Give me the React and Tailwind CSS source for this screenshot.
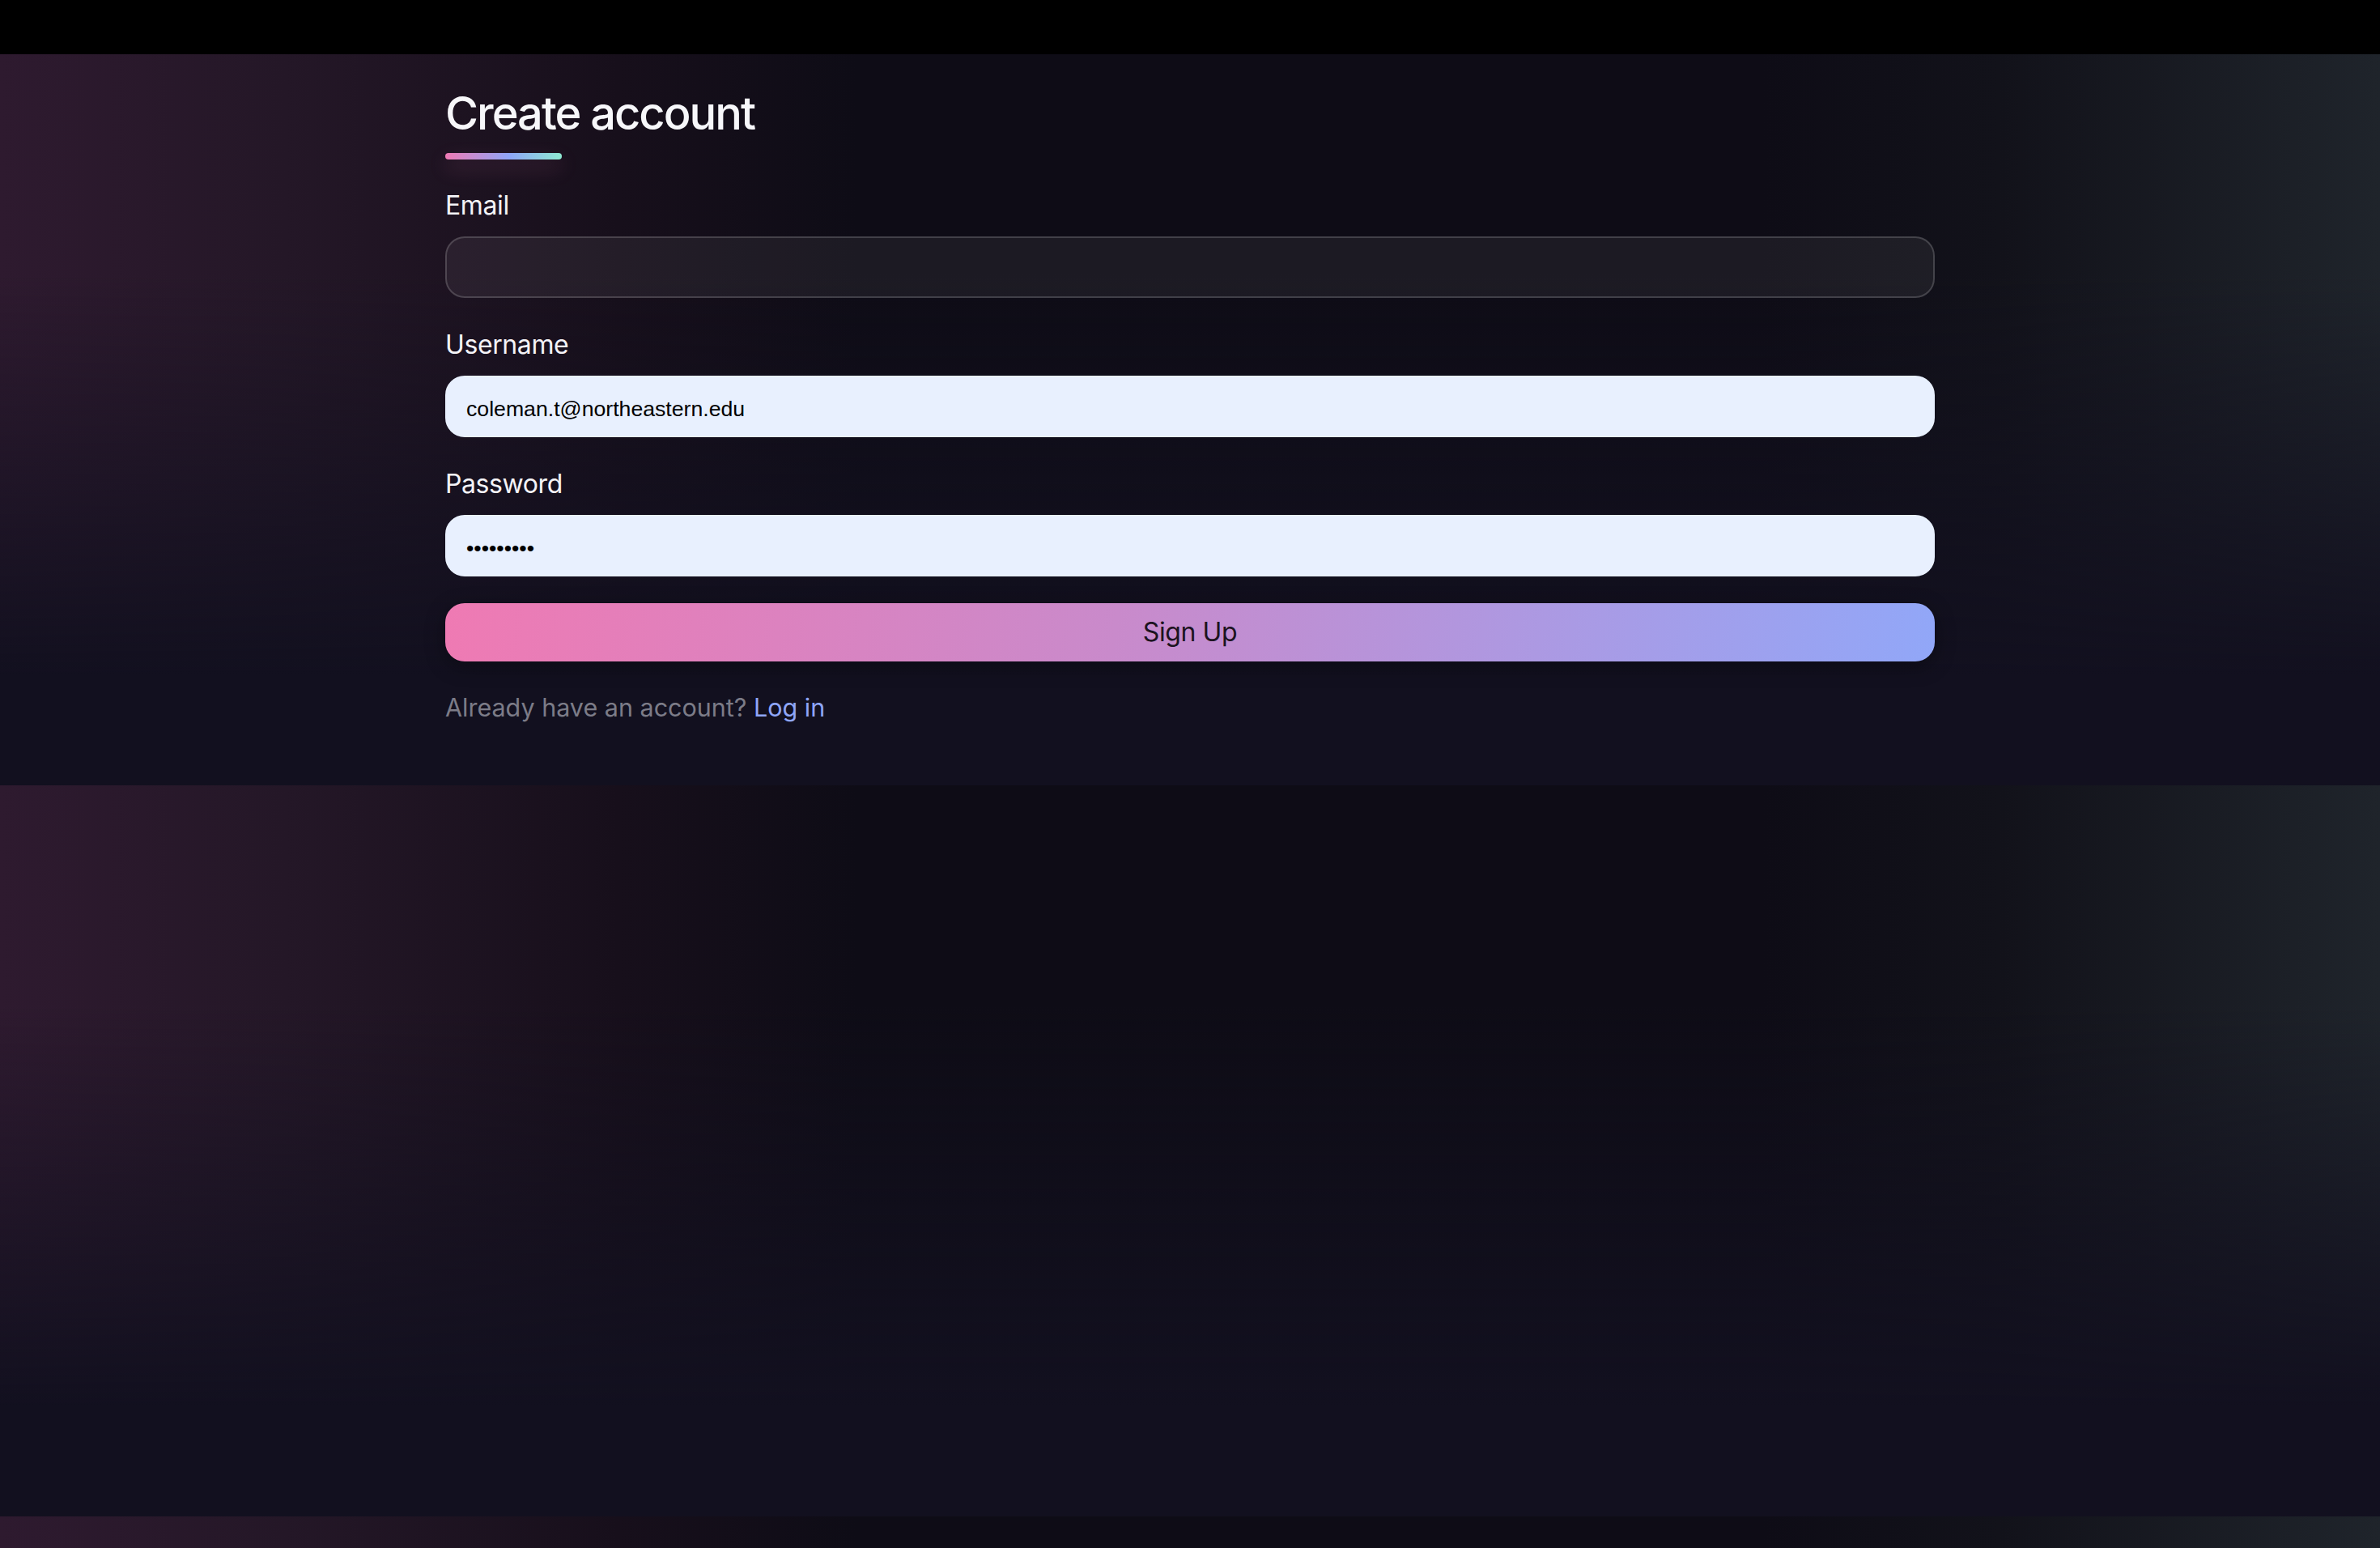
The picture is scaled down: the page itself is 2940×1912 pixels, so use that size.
import { useState } from "react";

const sans = "font-['Inter','Noto_Sans',sans-serif]";

function Field({ label, type = "text", value, filled }) {
  const [val, setVal] = useState(value || "");
  return (
    <div className="flex flex-col">
      <label className={`${sans} text-[32px] leading-[48px] tracking-[-0.4px] text-[#f4f3f7] mb-[14px]`}>{label}</label>
      <input
        type={type}
        value={val}
        onChange={(e) => setVal(e.target.value)}
        className={
          filled
            ? "h-[76px] w-full rounded-[24px] border-2 border-[#e8f0fe] bg-[#e8f0fe] px-[24px] pt-[6px] text-[26.67px] text-black outline-none font-['Liberation_Sans',Arial,sans-serif]"
            : "h-[76px] w-full rounded-[24px] border-2 border-white/[0.17] bg-white/[0.06] px-[24px] pt-[6px] text-[26.67px] text-white outline-none font-['Liberation_Sans',Arial,sans-serif]"
        }
      />
    </div>
  );
}

export default function App() {
  return (
    <div className="min-h-screen bg-black">
      {/* top strip */}
      <div className="h-[67px] bg-black" />

      {/* page body, background tile repeats every 903px */}
      <div className="h-[1845px] bg-[#0e0c16] bg-[linear-gradient(to_bottom,rgba(18,16,31,0)_0%,rgba(18,16,31,0)_30%,rgba(18,16,31,1)_85%),linear-gradient(to_right,#2e1a2f_0%,#241727_12%,#170f1b_26%,#0e0c16_36%,#0e0c16_74%,#12121a_84%,#1f242b_100%)] bg-[length:100%_903px] bg-repeat-y">
        <div className="mx-auto w-[1840px] pt-[41px]">
          <h1 className={`${sans} text-[56px] leading-[64px] font-medium text-[#f7f7fa] tracking-[-2px]`}>
            Create account
          </h1>
          <div className="mt-[17px] h-[8px] w-[144px] rounded-full bg-[linear-gradient(to_right,#ef7ab4,#8fa6f8_55%,#8ee9d1)] shadow-[0_10px_24px_rgba(240,122,181,0.22)]" />

          <form className="mt-[33px] flex flex-col gap-[34px]" onSubmit={(e) => e.preventDefault()}>
            <Field label="Email" type="email" />
            <Field label="Username" value="coleman.t@northeastern.edu" filled />
            <Field label="Password" type="password" value="secretpwd" filled />
          </form>

          <button
            type="button"
            className={`${sans} mt-[33px] h-[72px] w-full rounded-[24px] bg-[linear-gradient(100deg,#ef7ab3_0%,#c98acb_45%,#91a7f8_100%)] text-[32px] tracking-[-0.4px] text-[#1c1320] shadow-[0_6px_24px_rgba(0,0,0,0.35)]`}
          >
            Sign Up
          </button>

          <p className={`${sans} mt-[34px] text-[30.5px] leading-[45px] text-[#7c7c88]`}>
            Already have an account?{" "}
            <a href="#" className="text-[#8fa6f8]">Log in</a>
          </p>
        </div>
      </div>
    </div>
  );
}
